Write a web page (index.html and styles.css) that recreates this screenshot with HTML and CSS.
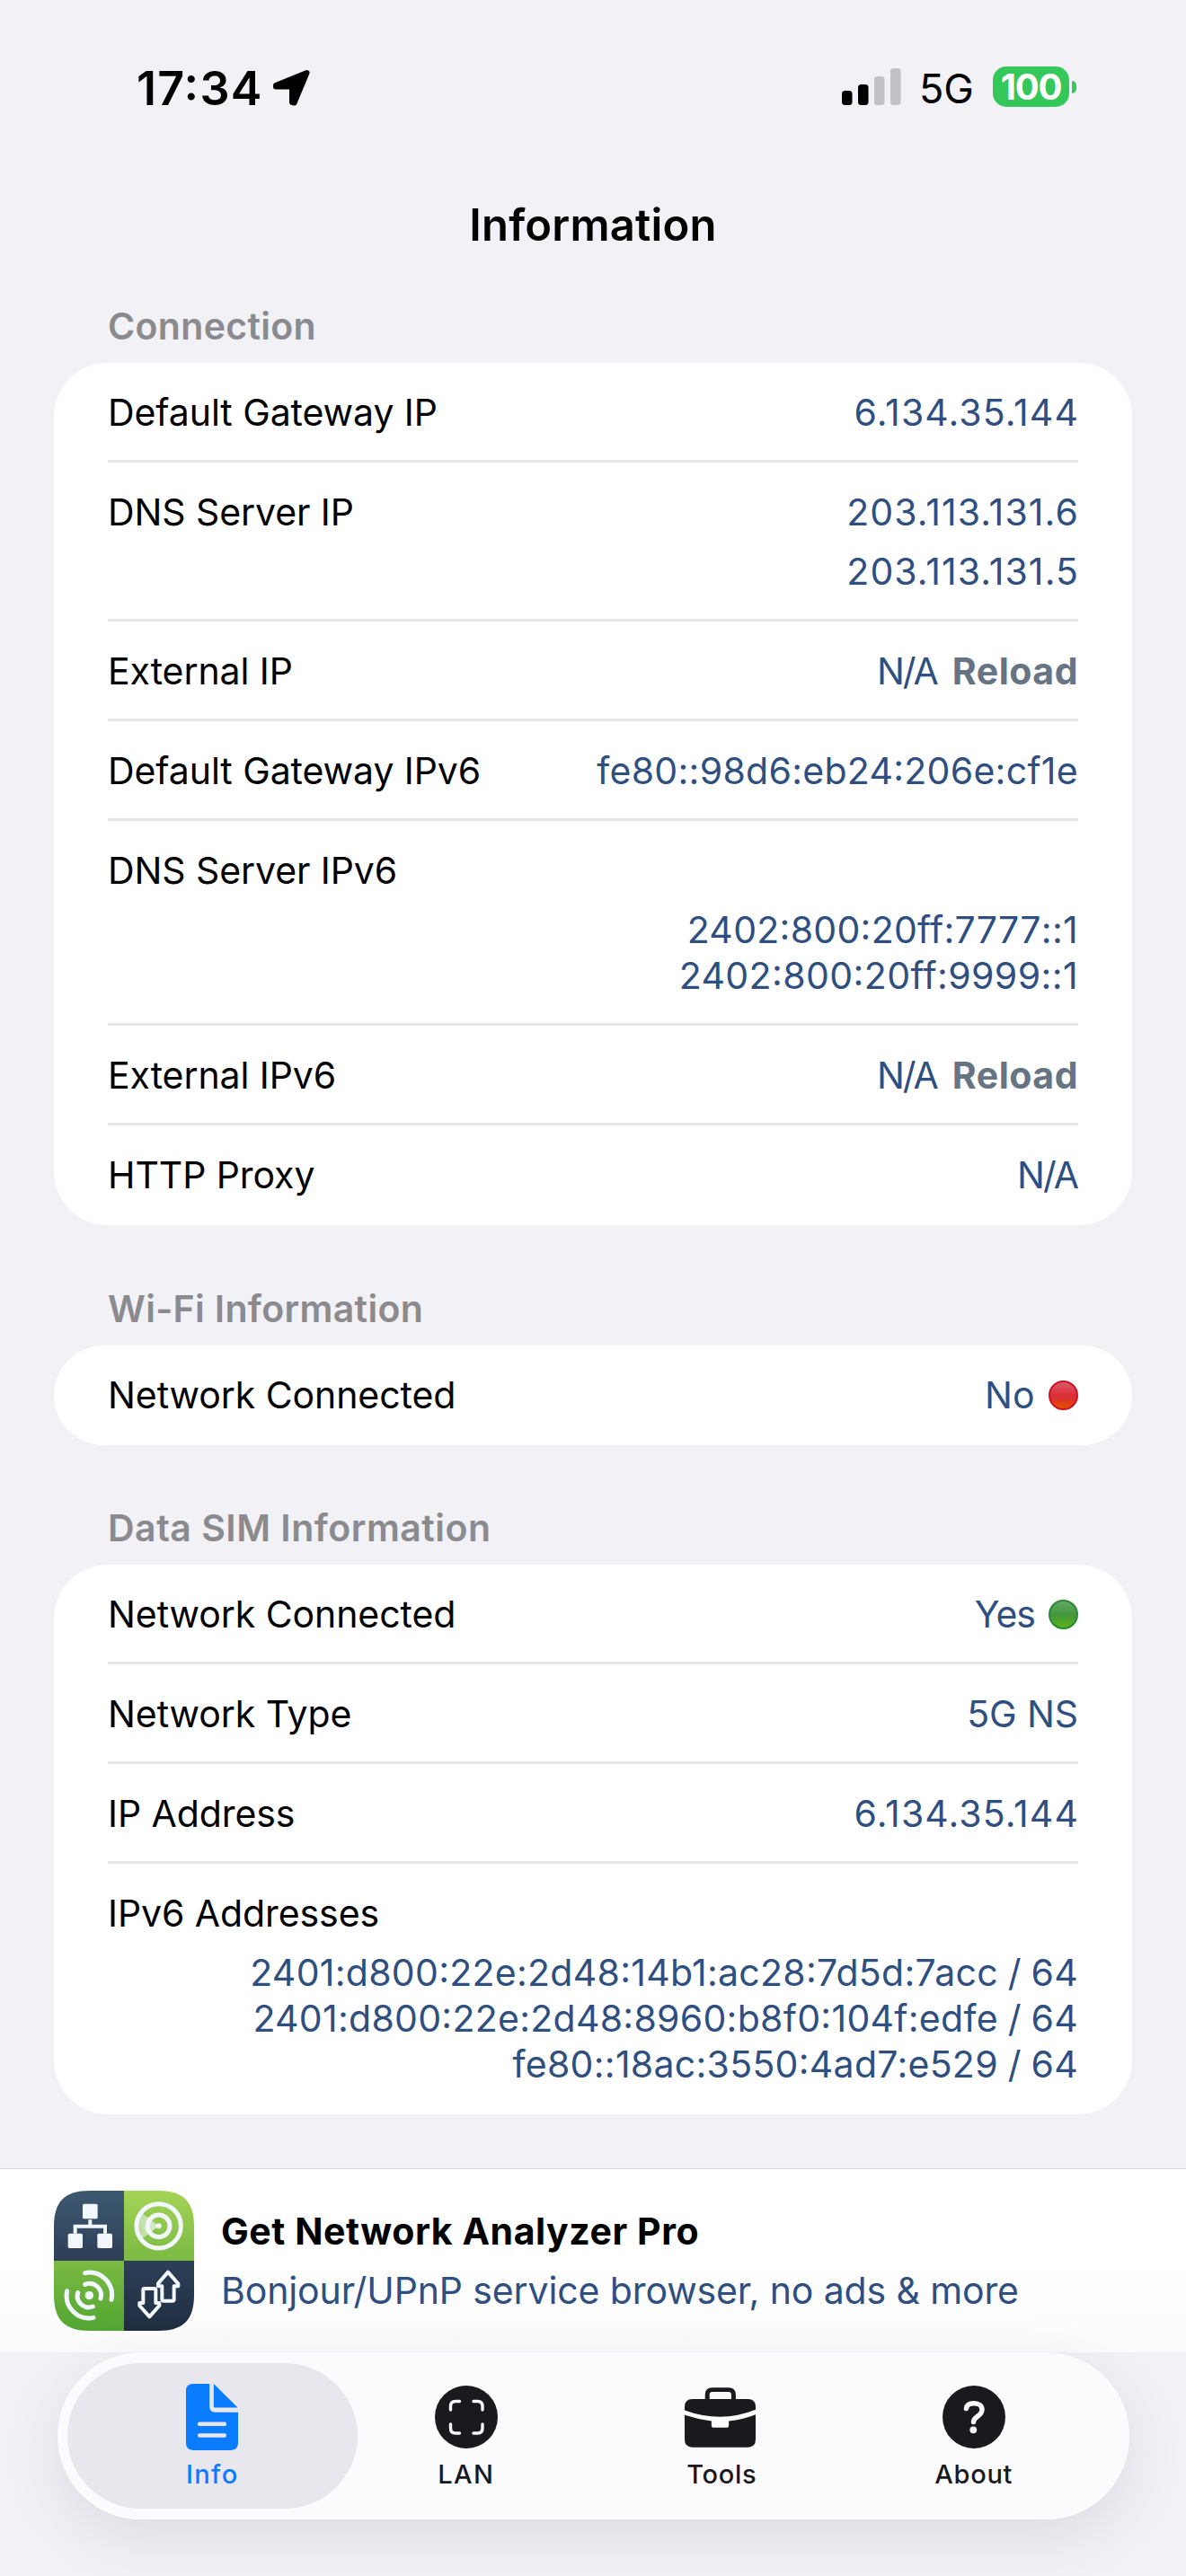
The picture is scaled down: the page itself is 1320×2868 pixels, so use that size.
FILE: index.html
```html
<!DOCTYPE html>
<html lang="en">
<head>
<meta charset="utf-8">
<title>Information</title>
<link rel="stylesheet" href="styles.css">
</head>
<body>
<div class="screen">
  <header class="status-bar">
    <div class="clock">
      <span class="time">17:34</span>
      <svg class="location" viewBox="0 0 43 42" width="43" height="42" aria-hidden="true"><path d="M38.5 4 4 18v1.500h18V37l2.500.5z" fill="#000" stroke="#000" stroke-width="6" stroke-linejoin="round"/></svg>
    </div>
    <div class="indicators">
      <svg class="signal" viewBox="0 0 66 41" width="66" height="41" aria-hidden="true">
        <rect x="0" y="25" width="11.500" height="16" rx="3.500"/><rect x="18" y="18" width="11.500" height="23" rx="3.500"/>
        <rect x="36" y="9" width="11.500" height="32" rx="3.500" fill="#c2c1c7"/><rect x="54" y="0" width="11.500" height="41" rx="3.500" fill="#c2c1c7"/>
      </svg>
      <span class="network">5G</span>
      <div class="battery"><span class="level">100</span><span class="nub"></span></div>
    </div>
  </header>

  <h1 class="title">Information</h1>

  <main class="content">
    <section class="group">
      <h2 class="group-title">Connection</h2>
      <div class="card">
        <div class="row"><span class="label">Default Gateway IP</span><span class="value ip">6.134.35.144</span></div>
        <div class="row"><span class="label">DNS Server IP</span><div class="values spaced"><span class="value ip">203.113.131.6</span><span class="value ip">203.113.131.5</span></div></div>
        <div class="row"><span class="label">External IP</span><div class="inline"><span class="value na">N/A</span><span class="reload">Reload</span></div></div>
        <div class="row"><span class="label">Default Gateway IPv6</span><span class="value">fe80<span class="sep">::</span>98d6:eb24:206e:cf1e</span></div>
        <div class="row stacked"><span class="label">DNS Server IPv6</span><div class="values"><span class="value">2402:800:20ff:7777<span class="sep">::</span>1</span><span class="value nines">2402:800:20ff:9999<span class="sep">::</span>1</span></div></div>
        <div class="row"><span class="label">External IPv6</span><div class="inline"><span class="value na">N/A</span><span class="reload">Reload</span></div></div>
        <div class="row"><span class="label">HTTP Proxy</span><span class="value na">N/A</span></div>
      </div>
    </section>

    <section class="group">
      <h2 class="group-title">Wi-Fi Information</h2>
      <div class="card">
        <div class="row"><span class="label">Network Connected</span><div class="state"><span class="value">No</span><span class="dot red"></span></div></div>
      </div>
    </section>

    <section class="group">
      <h2 class="group-title wide">Data SIM Information</h2>
      <div class="card">
        <div class="row"><span class="label">Network Connected</span><div class="state"><span class="value yes">Yes</span><span class="dot green"></span></div></div>
        <div class="row"><span class="label">Network Type</span><span class="value type">5G NS</span></div>
        <div class="row"><span class="label">IP Address</span><span class="value ip">6.134.35.144</span></div>
        <div class="row stacked"><span class="label">IPv6 Addresses</span><div class="values prefixed"><span class="value">2401:d800:22e:2d48:14b1:ac28:7d5d:7acc / 64</span><span class="value">2401:d800:22e:2d48:8960:b8f0:104f:edfe / 64</span><span class="value">fe80<span class="sep">::</span>18ac:3550:4ad7:e529 / 64</span></div></div>
      </div>
    </section>
  </main>

  <aside class="banner">
    <svg class="logo" viewBox="30 57 468 468" width="156" height="156" aria-hidden="true">
      <defs>
        <linearGradient id="navy" gradientUnits="userSpaceOnUse" x1="0" y1="57" x2="0" y2="525"><stop offset="0" stop-color="#3c5870"/><stop offset=".5" stop-color="#2d4058"/><stop offset="1" stop-color="#1f2d40"/></linearGradient>
        <linearGradient id="lime" gradientUnits="userSpaceOnUse" x1="0" y1="57" x2="0" y2="525"><stop offset="0" stop-color="#a4d357"/><stop offset=".5" stop-color="#7bba42"/><stop offset="1" stop-color="#52a632"/></linearGradient>
        <linearGradient id="sweep" x1="0" x2="1"><stop offset="0" stop-color="#f2f8fd" stop-opacity=".45"/><stop offset="1" stop-color="#f2f8fd" stop-opacity=".8"/></linearGradient>
        <clipPath id="tile"><path d="M150 57H378C462 57 498 93 498 177V405C498 489 462 525 378 525H150C66 525 30 489 30 405V177C30 93 66 57 150 57Z"/></clipPath>
      </defs>
      <g clip-path="url(#tile)">
        <path fill="url(#navy)" d="M30 57h234v234H30zM264 291h234v234H264z"/>
        <path fill="url(#lime)" d="M264 57h234v234H264zM30 291h234v234H30z"/>
      </g>
      <g fill="#f1f7fd">
        <rect x="126" y="101" width="50" height="50" rx="5"/><rect x="77" y="200" width="49" height="49" rx="5"/><rect x="175" y="200" width="50" height="49" rx="5"/>
        <circle cx="380" cy="175" r="9"/><circle cx="148" cy="407" r="14"/>
      </g>
      <path d="M380 175 322 131Q304 175 322 219Z" fill="url(#sweep)"/>
      <g fill="none" stroke="#f1f7fd">
        <path stroke-width="12" d="M151 154V176M101 200V176H201V200"/>
        <g stroke-width="15"><circle cx="380" cy="175" r="74"/><circle cx="380" cy="175" r="37"/></g>
        <g stroke-width="15" stroke-linecap="round"><path d="M134 332A75 75 0 0 1 222 421M134 370A39 39 0 0 1 186 417M74 392A75 75 0 0 0 162 481M110 398A38 38 0 0 0 160 444"/></g>
        <g stroke-width="12" stroke-linejoin="round"><path d="M332 384H366Q370 384 370 388V432H382V441L349 478 316 441V432H328V388Q328 384 332 384Z"/><path d="M411 329 445 368V376H431V420Q431 425 426 425H396Q391 425 391 420V376H378V367Z"/></g>
      </g>
    </svg>
    <div class="banner-text"><strong>Get Network Analyzer Pro</strong><span class="tagline">Bonjour/UPnP service browser, no ads &amp; more</span></div>
  </aside>

  <nav class="tab-bar">
    <a class="tab active">
      <span class="icon"><svg viewBox="52 44 173 220" width="58" height="74" aria-hidden="true">
        <path fill="#0a7cff" d="M76 44H130V118Q130 138 150 138H225V240Q225 264 201 264H76Q52 264 52 240V68Q52 44 76 44ZM144 44 224 123H148Q144 123 144 119Z"/>
        <path stroke="#e8e7ed" stroke-width="13" stroke-linecap="round" d="M97 177H180M97 215H180"/></svg></span>
      <span class="tab-label info">Info</span>
    </a>
    <a class="tab">
      <span class="icon"><svg viewBox="0 0 70 70" width="70" height="70" aria-hidden="true"><circle cx="35" cy="35" r="35" fill="#1a1a1e"/><path fill="none" stroke="#fafafd" stroke-width="3.400" stroke-linecap="round" d="M17.500 27V23Q17.500 17.500 23 17.500H27.500M43 17.500H47.500Q53 17.500 53 23V27M53 43V47.500Q53 53 47.500 53H43M27.500 53H23Q17.500 53 17.500 47.500V43"/></svg></span>
      <span class="tab-label lan">LAN</span>
    </a>
    <a class="tab">
      <span class="icon"><svg viewBox="60 52 238 200" width="79" height="67" aria-hidden="true">
        <path fill="none" stroke="#1a1a1e" stroke-width="15" d="M136 96V76Q136 59 153 59H207Q224 59 224 76V96"/>
        <path fill="#1a1a1e" d="M86 90H272Q298 90 298 116V126Q238 150 179 150 120 150 60 128V116Q60 90 86 90ZM60 144Q105 159 150 164V178Q150 186 158 186H200Q208 186 208 178V164Q255 159 298 142V226Q298 252 272 252H86Q60 252 60 226Z"/></svg></span>
      <span class="tab-label tools">Tools</span>
    </a>
    <a class="tab">
      <span class="icon"><svg viewBox="0 0 70 70" width="70" height="70" aria-hidden="true"><circle cx="35" cy="35" r="35" fill="#1a1a1e"/><path fill="none" stroke="#fafafd" stroke-width="5.500" stroke-linecap="round" stroke-linejoin="round" d="M26.500 25.500C27 21.500 30.500 19.800 35 19.800 40.500 19.800 44 22.500 44 27 44 34 34.500 34.500 34.500 40.500"/><circle cx="34.300" cy="49.300" r="3.900" fill="#fafafd"/></svg></span>
      <span class="tab-label">About</span>
    </a>
  </nav>
</div>
</body>
</html>
```
FILE: styles.css
```css
* { box-sizing: border-box; }

body {
  margin: 0;
  background: #f1f1f6;
  color: #000;
  font: 400 41px/51px Inter, "Liberation Sans", sans-serif;
  font-feature-settings: "calt" 1;
}

.screen {
  width: 1320px;
  height: 2868px;
  display: flex;
  flex-direction: column;
  overflow: hidden;
}

/* Status bar */
.status-bar {
  height: 221px;
  padding: 67px 122px 0 152px;
  display: flex;
  justify-content: space-between;
  align-items: flex-start;
}
.clock { display: flex; align-items: flex-start; }
.time { width: 151px; font-size: 52px; font-weight: 600; line-height: 63px; letter-spacing: 1.2px; }
.location { margin-top: 10px; }
.indicators { display: flex; align-items: flex-start; }
.signal { margin-top: 9px; }
.network { width: 80px; margin: 5px 0 0 20px; font-size: 45px; line-height: 54px; }
.battery { display: flex; align-items: center; gap: 3px; margin: 7px 0 0 2px; }
.level {
  width: 85px;
  height: 45px;
  border-radius: 15px;
  background: #34c759;
  color: #fff;
  font-size: 40px;
  font-weight: 700;
  line-height: 45px;
  letter-spacing: -1.3px;
  text-align: center;
}
.nub { width: 5px; height: 14px; border-radius: 0 5px 5px 0; background: #34c759; }

.title { margin: 0; height: 117px; font-size: 49px; font-weight: 600; line-height: 59px; letter-spacing: .2px; text-align: center; }

/* Grouped lists */
.content { height: 2076px; padding: 0 60px; }
.group { margin-bottom: 67.5px; }
.group-title { margin: 0; padding: 0 60px 15px; font-size: 41px; font-weight: 600; line-height: 51px; letter-spacing: .33px; color: #8a8a8f; }
.group-title.wide { letter-spacing: .5px; }
.card { padding: 0 60px; border-radius: 60px; background: #fff; }
.row {
  display: flex;
  justify-content: space-between;
  padding: 30px 0 27px;
  border-bottom: 3px solid #e6e6e6;
}
.row:last-child { border-color: transparent; }
.row.stacked { flex-direction: column; gap: 15px; }
.label { letter-spacing: -.08px; }
.values { display: flex; flex-direction: column; align-items: flex-end; }
.values.spaced { gap: 15px; }
.prefixed { word-spacing: -1px; }
.value { color: #2e4f80; letter-spacing: .28px; }
.nines { letter-spacing: .4px; }
.type { letter-spacing: -.1px; }
.sep { font-feature-settings: "calt" 0; }
.ip { letter-spacing: 1.1px; margin-right: -1px; }
.na { letter-spacing: -2px; margin-right: 1px; }
.inline { display: flex; gap: 16px; }
.reload { color: #667484; font-weight: 700; letter-spacing: .5px; }
.state { display: flex; align-items: center; gap: 15px; }
.yes { letter-spacing: -1px; }
.dot { width: 33px; height: 33px; border-radius: 50%; }
.red { border: 2px solid #d01022; background: linear-gradient(#dc5a68, #d9303a 50%, #dc3328 65%, #e65100); }
.green { border: 2px solid #2c8736; background: linear-gradient(#64a866, #43973f 50%, #4a9e34 65%, #5cb317); }

/* Upgrade banner */
.banner {
  height: 205px;
  padding: 24px 60px;
  border-top: 1px solid #d6d6db;
  display: flex;
  gap: 30px;
  background: linear-gradient(#fff 50%, #fbfbfc);
}
.banner-text { display: flex; flex-direction: column; gap: 15px; padding-top: 20px; }
.banner-text strong { font-weight: 700; letter-spacing: .56px; }
.tagline { color: #2e4f80; letter-spacing: -.12px; }

/* Floating tab bar */
.tab-bar {
  width: 1193px;
  height: 186px;
  margin-left: 64px;
  padding: 0 32px 0 31px;
  display: grid;
  grid-template-columns: repeat(4, 1fr);
  border-radius: 93px;
  background: #fbfbfe;
  box-shadow: inset 0 -3px 2px -1px #fff, 0 20px 70px rgba(20, 15, 40, .09);
}
.tab { position: relative; display: flex; flex-direction: column; align-items: center; gap: 9px; padding-top: 35px; color: #1a1a1e; }
.tab.active { color: #0a7cff; }
.tab.active::before { content: ""; position: absolute; inset: 12px -20px; border-radius: 81px; background: #e8e7ed; }
.icon, .tab-label { position: relative; }
.icon { height: 74px; display: flex; align-items: center; }
.tab-label { font-size: 29px; font-weight: 500; line-height: 35px; letter-spacing: .7px; }
.info, .lan { letter-spacing: 1.4px; }
.tools { padding-left: 4px; }
```
